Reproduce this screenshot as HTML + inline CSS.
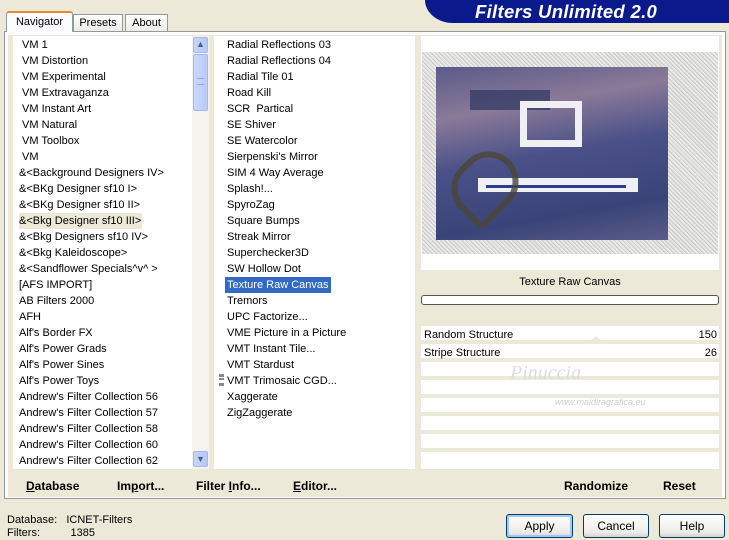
<!DOCTYPE html>
<html><head><meta charset="utf-8"><style>
*{margin:0;padding:0;box-sizing:border-box}
body{width:729px;height:538px;background:#ECE9D8;font-family:"Liberation Sans",sans-serif;font-size:11px;color:#000;position:relative;overflow:hidden}
.a{position:absolute}
.list div{height:16px;line-height:16px;white-space:nowrap}
.b{font-weight:bold;font-size:12px}
.btn{position:absolute;height:24px;border:1px solid #003C74;border-radius:3px;background:linear-gradient(#fff,#ECEBE6 80%,#D6D0C5);text-align:center;line-height:22px;font-size:12px}
.row{position:absolute;left:421px;width:298px;height:16px;background:#fff;border-bottom:2px solid #ECE9D8}
</style></head><body>
<div class="a" style="left:425px;top:0;width:304px;height:23px;background:#0A1A8C;border-bottom-left-radius:28px 23px"></div>
<div class="a" style="left:475px;top:1px;color:#fff;font-weight:bold;font-style:italic;font-size:18.5px;letter-spacing:0.3px">Filters Unlimited 2.0</div>
<div class="a" style="left:4px;top:31px;width:722px;height:468px;border:1px solid #919B9C;background:#FCFCFE"></div>
<div class="a" style="left:6px;top:11px;width:67px;height:21px;background:#FCFCFE;border:1px solid #919B9C;border-bottom:none;border-top:2px solid #E68B2C;border-radius:3px 3px 0 0;text-align:center;line-height:18px">Navigator</div>
<div class="a" style="left:73px;top:14px;width:50px;height:17px;background:linear-gradient(#fff,#ECEBE6);border:1px solid #919B9C;border-bottom:none;text-align:center;line-height:17px">Presets</div>
<div class="a" style="left:125px;top:14px;width:43px;height:17px;background:linear-gradient(#fff,#ECEBE6);border:1px solid #919B9C;border-bottom:none;text-align:center;line-height:17px">About</div>
<div class="a" style="left:8px;top:35px;width:714px;height:462px;background:#ECE9D8"></div>
<div class="a" style="left:13px;top:36px;width:196px;height:433px;background:#fff"></div>
<div class="a list" style="left:19px;top:37px;width:172px">
<div>&nbsp;VM 1</div><div>&nbsp;VM Distortion</div><div>&nbsp;VM Experimental</div><div>&nbsp;VM Extravaganza</div><div>&nbsp;VM Instant Art</div><div>&nbsp;VM Natural</div><div>&nbsp;VM Toolbox</div><div>&nbsp;VM</div><div>&amp;&lt;Background Designers IV&gt;</div><div>&amp;&lt;BKg Designer sf10 I&gt;</div><div>&amp;&lt;BKg Designer sf10 II&gt;</div><div style="background:#ECE9D8;width:123px">&amp;&lt;Bkg Designer sf10 III&gt;</div><div>&amp;&lt;Bkg Designers sf10 IV&gt;</div><div>&amp;&lt;Bkg Kaleidoscope&gt;</div><div>&amp;&lt;Sandflower Specials^v^ &gt;</div><div>[AFS IMPORT]</div><div>AB Filters 2000</div><div>AFH</div><div>Alf's Border FX</div><div>Alf's Power Grads</div><div>Alf's Power Sines</div><div>Alf's Power Toys</div><div>Andrew's Filter Collection 56</div><div>Andrew's Filter Collection 57</div><div>Andrew's Filter Collection 58</div><div>Andrew's Filter Collection 60</div><div>Andrew's Filter Collection 62</div>
</div>
<div class="a" style="left:192px;top:36px;width:17px;height:433px;background:#F4F3EE"></div>
<div class="a" style="left:193px;top:37px;width:15px;height:16px;background:linear-gradient(90deg,#C6D5FB,#B4C8F6);border:1px solid #A4B9E9;border-radius:2px;color:#4D6185;font-size:9px;text-align:center;line-height:13px">&#9650;</div>
<div class="a" style="left:193px;top:54px;width:15px;height:57px;background:linear-gradient(90deg,#CAD8FC,#B7CBF7);border:1px solid #A4B9E9;border-radius:2px"></div>
<div class="a" style="left:197px;top:78px;width:7px;height:7px;border-top:1px solid #8FA6DC;border-bottom:1px solid #8FA6DC"></div>
<div class="a" style="left:193px;top:451px;width:15px;height:16px;background:linear-gradient(90deg,#C6D5FB,#B4C8F6);border:1px solid #A4B9E9;border-radius:2px;color:#4D6185;font-size:9px;text-align:center;line-height:14px">&#9660;</div>
<div class="a" style="left:214px;top:36px;width:201px;height:433px;background:#fff"></div>
<div class="a list" style="left:227px;top:37px;width:180px">
<div>Radial Reflections 03</div><div>Radial Reflections 04</div><div>Radial Tile 01</div><div>Road Kill</div><div>SCR&nbsp; Partical</div><div>SE Shiver</div><div>SE Watercolor</div><div>Sierpenski's Mirror</div><div>SIM 4 Way Average</div><div>Splash!...</div><div>SpyroZag</div><div>Square Bumps</div><div>Streak Mirror</div><div>Superchecker3D</div><div>SW Hollow Dot</div><div style="background:#316AC5;color:#fff;width:106px;margin-left:-2px;padding-left:2px">Texture Raw Canvas</div><div>Tremors</div><div>UPC Factorize...</div><div>VME Picture in a Picture</div><div>VMT Instant Tile...</div><div>VMT Stardust</div><div>VMT Trimosaic CGD...</div><div>Xaggerate</div><div>ZigZaggerate</div>
</div>
<div class="a" style="left:219px;top:374px;width:5px;height:12px;border-top:3px solid #888;border-bottom:3px solid #888"><div style="margin-top:1px;height:2px;background:#888"></div></div>
<div class="a" style="left:421px;top:36px;width:298px;height:234px;background:#fff"></div>
<div class="a" style="left:422px;top:52px;width:296px;height:202px;background:#DCDCDA;background-image:repeating-linear-gradient(45deg,#eeeeec 0 1px,#cacac8 1px 2px,#e2e2e0 2px 3px)"></div>
<div class="a" style="left:436px;top:67px;width:232px;height:173px;background:linear-gradient(170deg,#5A5A8A 0%,#8A7A98 25%,#4A5088 50%,#3A4478 80%,#5A5C88 100%)"></div>
<div class="a" style="left:470px;top:90px;width:80px;height:20px;background:#2E3560;opacity:.7"></div>
<div class="a" style="left:520px;top:101px;width:62px;height:46px;border:7px solid #F0F0F4"></div>
<div class="a" style="left:478px;top:178px;width:160px;height:14px;background:#F0F0F4"></div>
<div class="a" style="left:486px;top:185px;width:140px;height:3px;background:#2A3E8A"></div>
<div class="a" style="left:455px;top:150px;width:60px;height:70px;border:6px solid #4A4636;border-radius:30px 30px 8px 30px;transform:rotate(45deg);opacity:.8"></div>
<div class="a" style="left:421px;top:271px;width:298px;text-align:center;line-height:22px">Texture Raw Canvas</div>
<div class="a" style="left:421px;top:295px;width:298px;height:10px;border:1px solid #555;border-radius:3px;background:#fff"></div>
<div class="row" style="top:326px"></div>
<div class="row" style="top:344px"></div>
<div class="row" style="top:362px"></div>
<div class="row" style="top:380px"></div>
<div class="row" style="top:398px"></div>
<div class="row" style="top:416px"></div>
<div class="row" style="top:434px"></div>
<div class="row" style="top:452px;height:17px;border:none"></div>
<div class="a" style="left:424px;top:327px;line-height:16px">Random Structure</div>
<div class="a" style="left:680px;top:327px;width:37px;text-align:right;line-height:16px">150</div>
<div class="a" style="left:424px;top:345px;line-height:16px">Stripe Structure</div>
<div class="a" style="left:680px;top:345px;width:37px;text-align:right;line-height:16px">26</div>
<div class="a" style="left:588px;top:336px;width:0;height:0;border-left:8px solid transparent;border-right:8px solid transparent;border-bottom:7px solid #ECE9D8"></div>
<div class="a" style="left:510px;top:362px;color:#ddd;font-style:italic;font-size:20px;font-family:'Liberation Serif',serif">Pinuccia</div>
<div class="a" style="left:555px;top:397px;color:#ccc;font-size:9px;font-style:italic">www.maidiragrafica.eu</div>
<div class="a b" style="left:26px;top:479px"><u>D</u>atabase</div>
<div class="a b" style="left:117px;top:479px">Im<u>p</u>ort...</div>
<div class="a b" style="left:196px;top:479px">Filter <u>I</u>nfo...</div>
<div class="a b" style="left:293px;top:479px"><u>E</u>ditor...</div>
<div class="a b" style="left:564px;top:479px">Randomize</div>
<div class="a b" style="left:663px;top:479px">Reset</div>
<div class="a" style="left:7px;top:514px;line-height:13px">Database:&nbsp;&nbsp; ICNET-Filters<br>Filters:&nbsp;&nbsp;&nbsp;&nbsp;&nbsp;&nbsp;&nbsp;&nbsp;&nbsp; 1385</div>
<div class="btn" style="left:506px;top:514px;width:67px;box-shadow:inset 0 0 0 2px #A8C4F0">Apply</div>
<div class="btn" style="left:583px;top:514px;width:66px">Cancel</div>
<div class="btn" style="left:659px;top:514px;width:66px">Help</div>
</body></html>
